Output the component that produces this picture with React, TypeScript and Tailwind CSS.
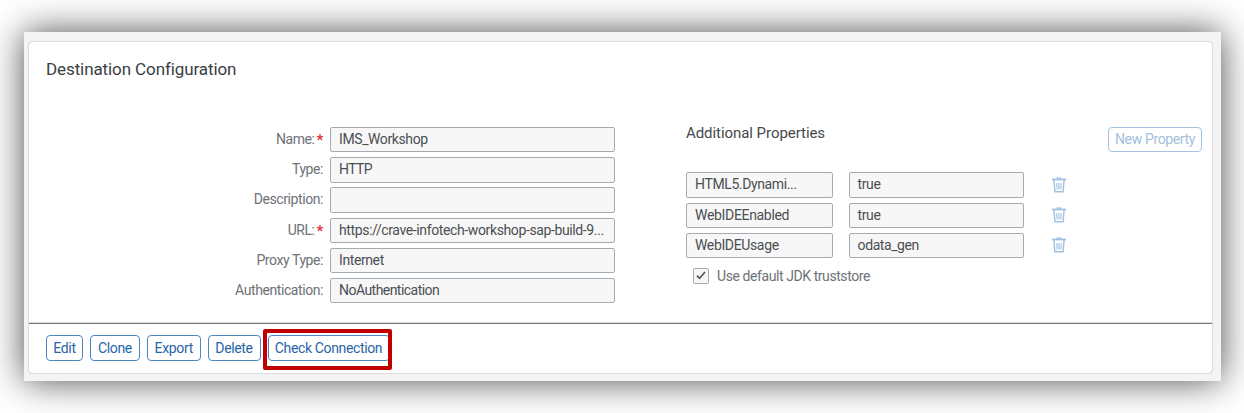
import React from "react";

const fields = [
  { label: "Name:", required: true, value: "IMS_Workshop", tracking: "tracking-[-0.4px]" },
  { label: "Type:", required: false, value: "HTTP", tracking: "tracking-[-0.6px]" },
  { label: "Description:", required: false, value: "", tracking: "" },
  { label: "URL:", required: true, value: "https://crave-infotech-workshop-sap-build-9...", tracking: "tracking-[-0.38px]" },
  { label: "Proxy Type:", required: false, value: "Internet", tracking: "tracking-[-0.4px]" },
  { label: "Authentication:", required: false, value: "NoAuthentication", tracking: "tracking-[-0.54px]" },
];

const properties = [
  { name: "HTML5.Dynami...", value: "true", tracking: "tracking-[-0.38px]" },
  { name: "WebIDEEnabled", value: "true", tracking: "tracking-[-0.32px]" },
  { name: "WebIDEUsage", value: "odata_gen", tracking: "tracking-[-0.36px]" },
];

const actions = [
  { label: "Edit", width: "w-[37px]" },
  { label: "Clone", width: "w-[50px]" },
  { label: "Export", width: "w-[53.5px]" },
  { label: "Delete", width: "w-[53px]" },
];

function Field({ children, className }: { children?: React.ReactNode; className: string }) {
  return (
    <div className={`h-[25.4px] shrink-0 rounded-[2px] border border-[#a4abb3] bg-[#f7f7f7] pl-2 leading-[23px] whitespace-nowrap text-[#4b4f53] ${className}`}>
      {children}
    </div>
  );
}

function TrashIcon() {
  return (
    <svg width="14" height="16" viewBox="0 0 14 16" fill="none" stroke="#a0c0e0">
      <path d="M0 2.5H14" strokeWidth="1.8" />
      <path d="M4.5 1.1H9.3" strokeWidth="1.4" />
      <path d="M1.9 3L2.9 14.8H11.1L12.1 3" strokeWidth="1.4" />
      <path d="M4.8 6L5.1 12.5M7 6V12.5M9.2 6L8.9 12.5" strokeWidth="1.1" />
    </svg>
  );
}

export default function App() {
  return (
    <div className="h-[413px] w-[1244px] overflow-hidden bg-white pt-8 pl-6 font-[Roboto,sans-serif] text-[14px] tracking-[-0.42px]">
      <div className="h-[349px] w-[1197px] bg-[#f4f4f4] pt-[9px] pl-1 shadow-[0_0_34px_rgba(0,0,0,0.7)]">
        <div className="flex h-[333px] w-[1185px] flex-col rounded-[5px] border border-[#dedede] bg-white shadow-[0_0_1px_#d0d0d0]">
          <div className="flex h-[281px] flex-col border-b border-[#dadada] pl-[17px]">
            <h1 className="mt-[15px] h-6 text-[17px] leading-6 tracking-[-0.1px] text-[#3a3e42]">Destination Configuration</h1>
            <div className="mt-[46px] flex">
              <div className="flex w-[569px] flex-col gap-[4.8px]">
                {fields.map((f) => (
                  <div key={f.label} className="flex h-[25.4px]">
                    <div className="flex w-[284px] justify-end pr-[7px] leading-[25px] text-[#6e7277]">
                      <span>{f.label}</span>
                      {f.required && <span className="ml-[2px] text-[15px] leading-[26px] font-bold text-[#d33]">*</span>}
                    </div>
                    <Field className="w-[285px]"><span className={f.tracking}>{f.value}</span></Field>
                  </div>
                ))}
              </div>
              <div className="ml-[71px] w-[516px] shrink-0">
                <div className="flex h-[45.4px] justify-between">
                  <h2 className="-mt-1 text-[15px] leading-[21px] tracking-[-0.06px] text-[#45494d]">Additional Properties</h2>
                  <button className="h-[25px] w-[94px] rounded-[4px] border border-[#a6c4e0] leading-[21px] tracking-[-0.36px] whitespace-nowrap text-[#a3c0dd]">New Property</button>
                </div>
                <div className="flex flex-col gap-[4.8px]">
                  {properties.map((p) => (
                    <div key={p.name} className="flex items-center">
                      <Field className="w-[147px]"><span className={p.tracking}>{p.name}</span></Field>
                      <Field className="ml-[15.6px] w-[175.6px]">{p.value}</Field>
                      <div className="ml-[27.8px]"><TrashIcon /></div>
                    </div>
                  ))}
                </div>
                <div className="mt-[9.6px] ml-[7px] flex items-center">
                  <div className="flex h-4 w-4 items-center justify-center rounded-[2px] border border-[#a4abb3] bg-[#f7f7f7]">
                    <svg width="10" height="9" viewBox="0 0 10 9" fill="none" stroke="#55595e" strokeWidth="1.8"><path d="M1 4.7L3.6 7.3L9 1" /></svg>
                  </div>
                  <span className="ml-2 leading-4 text-[#6e7277]">Use default JDK truststore</span>
                </div>
              </div>
            </div>
          </div>
          <div className="flex grow border-t border-[#777] pt-[11px] pl-[17px]">
            <div className="flex gap-[7px]">
              {actions.map((a) => (
                <button key={a.label} className={`h-[26px] rounded-[4px] border border-[#4d86bf] leading-[22px] tracking-[-0.36px] whitespace-nowrap text-[#2865a6] ${a.width}`}>{a.label}</button>
              ))}
              <div className="relative">
                <button className="h-[26px] w-[122px] rounded-[4px] border border-[#4d86bf] leading-[22px] tracking-[-0.36px] whitespace-nowrap text-[#2865a6]">Check Connection</button>
                <div className="absolute -top-[6px] -left-[4.5px] h-[41px] w-[129px] rounded-[2px] border-4 border-[#be0000]" />
              </div>
            </div>
          </div>
        </div>
      </div>
    </div>
  );
}
